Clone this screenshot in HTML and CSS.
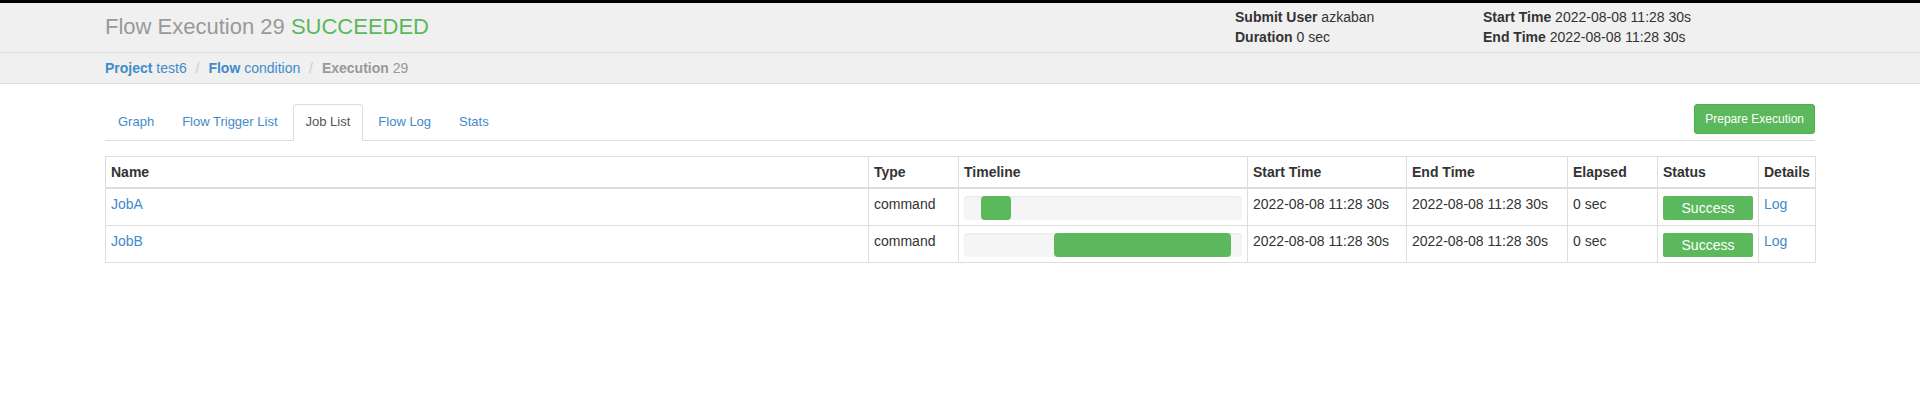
FILE: index.html
```html
<!DOCTYPE html>
<html lang="en">
<head>
<meta charset="utf-8">
<title>Flow Execution 29</title>
<link rel="stylesheet" href="styles.css">
</head>
<body>
<div class="page-header">
  <div class="header-inner">
    <h1 class="title">Flow Execution 29 <span class="title-status">SUCCEEDED</span></h1>
    <div class="header-info">
      <div><b>Submit User</b> azkaban</div>
      <div><b>Start Time</b> 2022-08-08 11:28 30s</div>
      <div><b>Duration</b> 0 sec</div>
      <div><b>End Time</b> 2022-08-08 11:28 30s</div>
    </div>
  </div>
</div>
<div class="crumb-bar">
  <div class="crumb-inner"><a class="crumb" href="#"><b>Project</b> test6</a> <span class="sep">/&nbsp;</span><a class="crumb" href="#"><b>Flow</b> condition</a> <span class="sep">/&nbsp;</span><span class="crumb-active"><b>Execution</b> 29</span></div>
</div>
<div class="content">
  <div class="tabbar">
    <ul class="tabs">
      <li class="tab"><a href="#">Graph</a></li>
      <li class="tab"><a href="#">Flow Trigger List</a></li>
      <li class="tab active"><a href="#">Job List</a></li>
      <li class="tab"><a href="#">Flow Log</a></li>
      <li class="tab"><a href="#">Stats</a></li>
    </ul>
    <button class="btn-prepare" type="button">Prepare Execution</button>
  </div>
  <table class="jobs">
    <colgroup>
      <col class="c-name"><col class="c-type"><col class="c-timeline"><col class="c-start"><col class="c-end"><col class="c-elapsed"><col class="c-status"><col class="c-details">
    </colgroup>
    <thead>
      <tr><th>Name</th><th>Type</th><th>Timeline</th><th>Start Time</th><th>End Time</th><th>Elapsed</th><th>Status</th><th>Details</th></tr>
    </thead>
    <tbody>
      <tr>
        <td><a class="link" href="#">JobA</a></td>
        <td>command</td>
        <td><div class="track"><div class="bar" style="margin-left:6.1%;width:10.7%"></div></div></td>
        <td>2022-08-08 11:28 30s</td>
        <td>2022-08-08 11:28 30s</td>
        <td>0 sec</td>
        <td><div class="status-ok">Success</div></td>
        <td><a class="link" href="#">Log</a></td>
      </tr>
      <tr>
        <td><a class="link" href="#">JobB</a></td>
        <td>command</td>
        <td><div class="track"><div class="bar" style="margin-left:32.5%;width:63.6%"></div></div></td>
        <td>2022-08-08 11:28 30s</td>
        <td>2022-08-08 11:28 30s</td>
        <td>0 sec</td>
        <td><div class="status-ok">Success</div></td>
        <td><a class="link" href="#">Log</a></td>
      </tr>
    </tbody>
  </table>
</div>
</body>
</html>
```
FILE: styles.css
```css
* { box-sizing: border-box; }
body {
  margin: 0;
  font-family: "Liberation Sans", Arial, sans-serif;
  font-size: 14px;
  line-height: 20px;
  color: #333;
  background: #fff;
}
.page-header {
  border-top: 3px solid #000;
  background: #f0f0f0;
  border-bottom: 1px solid #ddd;
  height: 53px;
}
.header-inner {
  padding: 0 105px;
  display: flex;
  justify-content: space-between;
  align-items: flex-start;
}
.title {
  margin: 12px 0 0;
  font-size: 22px;
  line-height: 24px;
  font-weight: normal;
  color: #999;
}
.title-status { color: #5cb85c; }
.header-info {
  margin-top: 4px;
  display: grid;
  grid-template-columns: 248px 332px;
}
.crumb-bar {
  background: #f0f0f0;
  border-bottom: 1px solid #ddd;
}
.crumb-inner {
  padding: 5px 105px;
  white-space: nowrap;
}
.crumb { color: #428bca; text-decoration: none; }
.sep { padding: 0 5px; color: #ccc; }
.crumb-active { color: #999; }
.content { padding: 20px 105px 0; }
.tabbar {
  display: flex;
  border-bottom: 1px solid #ddd;
}
.tabs {
  list-style: none;
  margin: 0;
  padding: 0;
  display: flex;
}
.tab { margin-right: 2px; margin-bottom: -1px; }
.tab a {
  display: block;
  padding: 8px 12px;
  font-size: 13px;
  line-height: 18.57px;
  border: 1px solid transparent;
  border-radius: 4px 4px 0 0;
  color: #428bca;
  text-decoration: none;
}
.tab.active a {
  color: #555;
  background: #fff;
  border-color: #ddd #ddd transparent;
}
.btn-prepare {
  margin-left: auto;
  align-self: flex-start;
  padding: 5px 10px;
  font-family: "Liberation Sans", Arial, sans-serif;
  font-size: 12px;
  line-height: 18px;
  color: #fff;
  background: #5cb85c;
  border: 1px solid #4cae4c;
  border-radius: 3px;
}
.jobs {
  margin-top: 15px;
  width: 100%;
  border-collapse: collapse;
  table-layout: fixed;
  border: 1px solid #ddd;
}
.jobs th, .jobs td {
  border: 1px solid #ddd;
  padding: 5px;
  text-align: left;
  vertical-align: top;
  line-height: 20px;
  white-space: nowrap;
}
.jobs thead th { border-bottom-width: 2px; font-weight: bold; }
.c-name { width: 763px; }
.c-type { width: 90px; }
.c-timeline { width: 289px; }
.c-start { width: 159px; }
.c-end { width: 161px; }
.c-elapsed { width: 90px; }
.c-status { width: 101px; }
.c-details { width: 57px; }
.link { color: #428bca; text-decoration: none; }
.track {
  margin-top: 2px;
  height: 24px;
  display: flex;
  background: #f5f5f5;
  border-radius: 4px;
  box-shadow: inset 0 1px 2px rgba(0, 0, 0, 0.06);
}
.bar {
  height: 24px;
  background: #5cb85c;
  border-radius: 4px;
}
.status-ok {
  margin-top: 2px;
  height: 24px;
  line-height: 24px;
  background: #5cb85c;
  color: #fff;
  text-align: center;
  border-radius: 2px;
}
```
